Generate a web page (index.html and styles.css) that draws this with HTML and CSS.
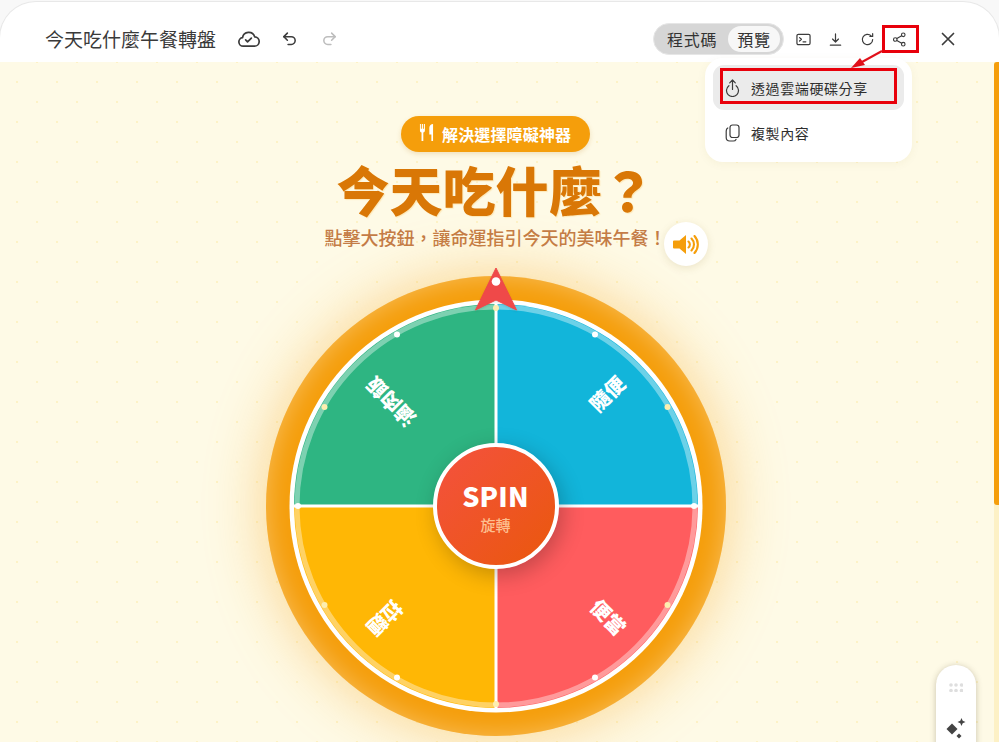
FILE: index.html
```html
<!DOCTYPE html>
<html lang="zh-Hant">
<head>
<meta charset="utf-8">
<title>今天吃什麼午餐轉盤</title>
<link rel="stylesheet" href="styles.css">
</head>
<body>
<div class="app">
  <header class="topbar">
    <div class="bar-left">
      <h1 class="doc-title">今天吃什麼午餐轉盤</h1>
      <div class="tool-group">
        <span class="tool"><svg class="ico-cloud" viewBox="0 0 24 24"><path d="M6.500 19a4.500 4.500 0 0 1-.7-8.950 6.500 6.500 0 0 1 12.600-.9 4.900 4.900 0 0 1-.4 9.850Z"/><path d="m9 12.500 2 2 4-4"/></svg></span>
        <span class="tool"><svg class="ico-md" viewBox="0 0 24 24"><path d="M9 13 4 8l5-5"/><path d="M4 8h10.500a5.500 5.500 0 0 1 0 11H10"/></svg></span>
        <span class="tool muted"><svg class="ico-md" viewBox="0 0 24 24"><path d="m15 13 5-5-5-5"/><path d="M20 8H9.500a5.500 5.500 0 0 0 0 11H14"/></svg></span>
      </div>
    </div>
    <div class="bar-right">
      <div class="toggle"><span class="toggle-item">程式碼</span><span class="toggle-item active">預覽</span></div>
      <div class="action-group">
        <span class="action"><svg class="ico-sm" viewBox="0 0 16 16"><rect x="1" y="2.500" width="14" height="11" rx="1.500"/><path d="m3.800 6 2 1.800-2 1.800M7.500 10.500h3"/></svg></span>
        <span class="action"><svg class="ico-sm" viewBox="0 0 16 16"><path d="M8 2v8.500M4.800 7.500 8 10.700l3.200-3.200M2.500 14h11"/></svg></span>
        <span class="action"><svg class="ico-sm" viewBox="0 0 16 16"><path d="M13.500 8a5.500 5.500 0 1 1-1.700-4"/><path d="M13.500 1.800v3h-3"/></svg></span>
        <span class="action"><svg class="ico-share" viewBox="0 0 16 16"><circle cx="3.500" cy="8" r="1.900"/><circle cx="12" cy="3" r="1.900"/><circle cx="12" cy="13" r="1.900"/><path d="m5.200 7 5.100-3M5.200 9l5.100 3"/></svg></span>
      </div>
      <span class="close"><svg class="ico-close" viewBox="0 0 14 14"><path d="M1.500 1.500l11 11M12.500 1.500l-11 11"/></svg></span>
    </div>
  </header>

  <div class="panel">
    <main class="stage">
      <div class="badge">
        <svg class="ico-utensils" viewBox="0 0 16 18"><path d="M1 0h1v5h1V0h1.200v5h1V0h1.100v6.500C6.300 8 5.400 8.800 4.600 9v9H2.700V9C1.800 8.800 1 8 1 6.500Z"/><path d="M15 0v18h-1.800v-7H11V4c0-2.400 2-4 4-4Z"/></svg>
        <span>解決選擇障礙神器</span>
      </div>
      <h2 class="headline">今天吃什麼？</h2>
      <p class="subtitle">點擊大按鈕，讓命運指引今天的美味午餐！</p>
      <div class="wheel">
        <svg class="wheel-art" viewBox="0 0 460 460">
          <circle class="ring" cx="230" cy="230" r="206.500"/>
          <path class="seg-blue" d="M230 230V28A202 202 0 0 1 432 230Z"/>
          <path class="seg-red" d="M230 230H432A202 202 0 0 1 230 432Z"/>
          <path class="seg-yellow" d="M230 230V432A202 202 0 0 1 28 230Z"/>
          <path class="seg-green" d="M230 230H28A202 202 0 0 1 230 28Z"/>
          <circle class="rim" cx="230" cy="230" r="199"/>
          <path class="spokes" d="M230 25V435M25 230H435"/>
          <g class="dot-white">
            <circle cx="329" cy="58.500" r="3"/><circle cx="428" cy="230" r="3"/><circle cx="329" cy="401.500" r="3"/><circle cx="131" cy="401.500" r="3"/><circle cx="32" cy="230" r="3"/><circle cx="131" cy="58.500" r="3"/>
          </g>
          <g class="dot-pale">
            <circle cx="230" cy="32" r="3"/><circle cx="401.500" cy="131" r="3"/><circle cx="401.500" cy="329" r="3"/><circle cx="230" cy="428" r="3"/><circle cx="58.500" cy="329" r="3"/><circle cx="58.500" cy="131" r="3"/>
          </g>
          <g transform="translate(230 230) rotate(-45)"><text class="seg-label" x="178" y="7">隨便</text></g>
          <g transform="translate(230 230) rotate(45)"><text class="seg-label" x="178" y="7">便當</text></g>
          <g transform="translate(230 230) rotate(135)"><text class="seg-label" x="178" y="7">拉麵</text></g>
          <g transform="translate(230 230) rotate(225)"><text class="seg-label" x="178" y="7">滷肉飯</text></g>
        </svg>
        <div class="hub"><span class="hub-main">SPIN</span><span class="hub-sub">旋轉</span></div>
        <svg class="pointer" viewBox="0 0 44 44"><path class="pointer-body" d="M22 1 42.500 43 22 33 1.500 43Z"/><circle class="pointer-dot" cx="22" cy="14.500" r="4.300"/></svg>
      </div>
      <span class="sound"><svg class="ico-sound" viewBox="0 0 26 19"><path class="snd-fill" d="M13 0v19L6.500 13.500H1a1 1 0 0 1-1-1v-6a1 1 0 0 1 1-1h5.500Z"/><path class="snd-line" d="M15.500 6.500a4 4 0 0 1 0 6M18.500 3.500a8.500 8.500 0 0 1 0 12M21.500 1a12.500 12.500 0 0 1 0 17"/></svg></span>
      <aside class="float-tools">
        <svg class="ico-grip" viewBox="0 0 14 9"><g><circle cx="2" cy="2" r="1.800"/><circle cx="7" cy="2" r="1.800"/><circle cx="12.500" cy="2" r="1.800"/><circle cx="2" cy="7.500" r="1.800"/><circle cx="7" cy="7.500" r="1.800"/><circle cx="12.500" cy="7.500" r="1.800"/></g></svg>
        <svg class="ico-spark" viewBox="0 0 22 22"><path d="M7 5.500 12.500 11 7 16.500 1.500 11Z"/><path d="M16.500 0l1.200 2.800L20.500 4l-2.800 1.200L16.500 8l-1.200-2.800L12.500 4l2.800-1.200Z"/><path d="M14 15.500l2.500 2.500-2.500 2.500-2.500-2.500Z"/></svg>
      </aside>
    </main>
    <div class="scrolltrack"><div class="scrollthumb"></div></div>
  </div>

  <div class="menu">
    <div class="menu-item hover">
      <svg class="ico-menu" viewBox="0 0 14 18"><path d="M3.400 6.700a6 6 0 1 0 7.200 0"/><path d="M7 10.500V1M4.200 3.800 7 1l2.800 2.800"/></svg>
      <span>透過雲端硬碟分享</span>
      <span class="mark-item"></span>
    </div>
    <div class="menu-item">
      <svg class="ico-menu" viewBox="0 0 14 18"><rect x="4.500" y="1" width="9" height="12.500" rx="2.500"/><path d="M2.300 4C1.300 4.500.7 5.500.7 7v6.500C.7 15.800 2 17 4.300 17h3.500c1.200 0 2.200-.5 2.700-1.600"/></svg>
      <span>複製內容</span>
    </div>
  </div>

  <span class="mark-share"></span>
  <svg class="mark-arrow" viewBox="0 0 34 20"><path class="arrow-line" d="M32 1 12 12"/><path class="arrow-head" d="M1 18 10 8 15 15Z"/></svg>
</div>
</body>
</html>
```

FILE: styles.css
```css
* { box-sizing: border-box; }

html, body {
  margin: 0;
  height: 100%;
  background: #f8f8f8;
  overflow: hidden;
}

body {
  font-family: "Noto Sans CJK TC", "Noto Sans", sans-serif;
  color: #333;
}

.app {
  position: relative;
  display: flex;
  flex-direction: column;
  height: 740px;
  margin-top: 2px;
  background: #fff;
  border-radius: 36px 36px 0 0;
  box-shadow: 0 0 0 1px #e8e8e8;
  overflow: hidden;
}

/* Top bar */
.topbar {
  flex: none;
  display: flex;
  justify-content: space-between;
  align-items: center;
  height: 60px;
  padding: 14px 35px 0 45px;
}

.bar-left, .bar-right, .tool-group, .action-group { display: flex; align-items: center; }

.doc-title {
  margin: 0 13px 0 0;
  font-size: 19px;
  font-weight: 400;
  line-height: 28px;
  white-space: nowrap;
  color: #3a3a3a;
}

.tool { display: flex; justify-content: center; align-items: center; width: 40px; height: 32px; }
.tool svg, .action svg, .close svg, .ico-menu {
  fill: none;
  stroke: #3c3c3c;
  stroke-linecap: round;
  stroke-linejoin: round;
}
.tool.muted svg { stroke: #bdbdbd; }
.ico-cloud { width: 23px; height: 23px; stroke-width: 1.800; margin-left: -2px; }
.ico-md { width: 17px; height: 17px; stroke-width: 2.200; }

.toggle {
  display: flex;
  align-items: center;
  width: 131px;
  height: 32px;
  padding: 0 3px 0 13px;
  justify-content: space-between;
  background: #d6d6d6;
  border: 1px solid #e6e6e6;
  border-radius: 16px;
}
.toggle-item { font-size: 16px; letter-spacing: .8px; line-height: 26px; color: #333; white-space: nowrap; }
.toggle-item.active {
  width: 52px;
  height: 26px;
  text-align: center;
  background: #f7f7f7;
  border-radius: 13px;
}

.action-group { margin-left: 4px; padding-right: 1px; }
.action { display: flex; justify-content: center; align-items: center; width: 31.750px; height: 32px; }
.ico-sm { width: 15px; height: 15px; stroke-width: 1.300; }
.ico-share { width: 15px; height: 15px; stroke-width: 1.200; }
.close { display: flex; justify-content: center; align-items: center; width: 32px; height: 32px; margin-left: 16px; }
.ico-close { width: 14px; height: 14px; stroke-width: 1.700; }

/* Main panel */
.panel {
  flex: 1;
  min-height: 0;
  display: flex;
}

.stage {
  position: relative;
  flex: 1;
  display: flex;
  flex-direction: column;
  align-items: center;
  padding: 54px 3px 0 0;
  background-color: #fefae6;
  background-image:
    radial-gradient(circle at center, #fdf2c6 1px, transparent 1.300px),
    radial-gradient(circle at center, #fdf2c6 1px, transparent 1.300px);
  background-size: 40px 40px;
  background-position: 17px -20px, -3px 0;
}

.scrolltrack { flex: none; width: 5px; background: #fdf1c6; }
.scrollthumb { width: 5px; height: 443px; background: #f59e0b; border-radius: 3px 0 0 3px; }

.badge {
  display: flex;
  align-items: center;
  gap: 8px;
  width: 189px;
  height: 36px;
  padding: 0 0 0 18px;
  background: #f59e0b;
  border-radius: 18px;
  color: #fff;
  font-size: 16px;
  font-weight: 700;
  letter-spacing: .15px;
  line-height: 24px;
  box-shadow: 0 2px 5px rgba(180, 120, 20, .2);
}
.ico-utensils { width: 15px; height: 17px; margin-top: -4px; fill: #fff; }

.headline {
  margin: 7px 0 0;
  font-size: 53px;
  font-weight: 900;
  line-height: 60px;
  color: #d97706;
  text-shadow: 1px 1px 1px #fde8b8;
  white-space: nowrap;
}

.subtitle {
  margin: 7px 0 0;
  font-size: 18px;
  font-weight: 500;
  line-height: 22px;
  color: #c47c46;
  white-space: nowrap;
}

.wheel {
  position: relative;
  flex: none;
  display: grid;
  place-items: center;
  width: 460px;
  height: 460px;
  margin-top: 27.500px;
  background: #f59e0b;
  border-radius: 50%;
  box-shadow: 0 0 60px rgba(245, 158, 11, .42), inset 0 0 26px rgba(255, 255, 255, .34);
}
.wheel-art, .hub { grid-area: 1 / 1; }
.wheel-art { display: block; width: 460px; height: 460px; }

.ring { fill: #fff; }
.seg-blue { fill: #12b5da; }
.seg-red { fill: #ff5c5e; }
.seg-yellow { fill: #ffb705; }
.seg-green { fill: #2eb582; }
.rim { fill: none; stroke: rgba(255, 255, 255, .38); stroke-width: 5; }
.spokes { fill: none; stroke: #fff; stroke-width: 3; }
.dot-white { fill: #fff; }
.dot-pale { fill: #fdeeb0; }
.seg-label {
  fill: #fff;
  font-size: 20px;
  font-weight: 900;
  text-anchor: end;
}

.hub {
  display: flex;
  flex-direction: column;
  align-items: center;
  justify-content: center;
  width: 126px;
  height: 126px;
  padding-top: 3px;
  border: 4px solid #fff;
  border-radius: 50%;
  background: linear-gradient(135deg, #f4513f, #ea580c);
  box-shadow: 4px 6px 22px rgba(0, 0, 0, .24);
}
.hub-main { font-size: 27px; font-weight: 900; line-height: 32px; color: #fff; letter-spacing: .2px; }
.hub-sub { font-size: 15px; font-weight: 500; line-height: 20px; color: #fdbf8f; margin-top: 3px; }

.pointer {
  position: absolute;
  top: -8.500px;
  left: 208px;
  width: 44px;
  height: 44px;
  filter: drop-shadow(0 1px 1px rgba(0, 0, 0, .12));
}
.pointer-body { fill: #ef4949; stroke: #ef4949; stroke-width: 1; stroke-linejoin: round; }
.pointer-dot { fill: #fff; }

.sound {
  position: absolute;
  left: 664px;
  top: 160px;
  display: flex;
  justify-content: center;
  align-items: center;
  width: 44px;
  height: 44px;
  background: #fff;
  border-radius: 50%;
  box-shadow: 0 2px 8px rgba(120, 90, 20, .14);
}
.ico-sound { width: 26px; height: 19px; }
.snd-fill { fill: #f59e0b; }
.snd-line { fill: none; stroke: #f59e0b; stroke-width: 2.100; stroke-linecap: round; }

.float-tools {
  position: absolute;
  left: 936px;
  top: 603px;
  display: flex;
  flex-direction: column;
  align-items: center;
  width: 40px;
  height: 110px;
  padding-top: 18px;
  background: #fff;
  border-radius: 20px;
  box-shadow: 0 1px 6px rgba(60, 50, 20, .28);
}
.ico-grip { width: 14px; height: 9px; fill: #dedede; }
.ico-spark { width: 22px; height: 22px; margin-top: 26px; fill: #444; }

/* Share menu */
.menu {
  position: absolute;
  left: 705px;
  top: 56px;
  width: 207px;
  padding: 7px 8px;
  background: #fff;
  border-radius: 18px;
  box-shadow: 0 2px 10px rgba(120, 100, 40, .06);
}
.menu-item {
  position: relative;
  display: flex;
  align-items: center;
  gap: 11px;
  height: 45px;
  padding-left: 12px;
  border-radius: 11px;
  font-size: 14px;
  letter-spacing: .6px;
  line-height: 20px;
  color: #2e2e2e;
  white-space: nowrap;
}
.menu-item.hover { background: #ebebeb; }
.ico-menu { flex: none; width: 15px; height: 18px; stroke-width: 1.200; }

.mark-item {
  position: absolute;
  left: 7px;
  top: 3px;
  width: 177px;
  height: 36px;
  border: 3px solid #e8000b;
}
.mark-share {
  position: absolute;
  left: 882px;
  top: 23px;
  width: 37px;
  height: 28px;
  border: 3px solid #e8000b;
}
.mark-arrow {
  position: absolute;
  left: 850px;
  top: 48px;
  width: 34px;
  height: 20px;
}
.arrow-line { fill: none; stroke: #e0101a; stroke-width: 2; }
.arrow-head { fill: #e0101a; }
```
